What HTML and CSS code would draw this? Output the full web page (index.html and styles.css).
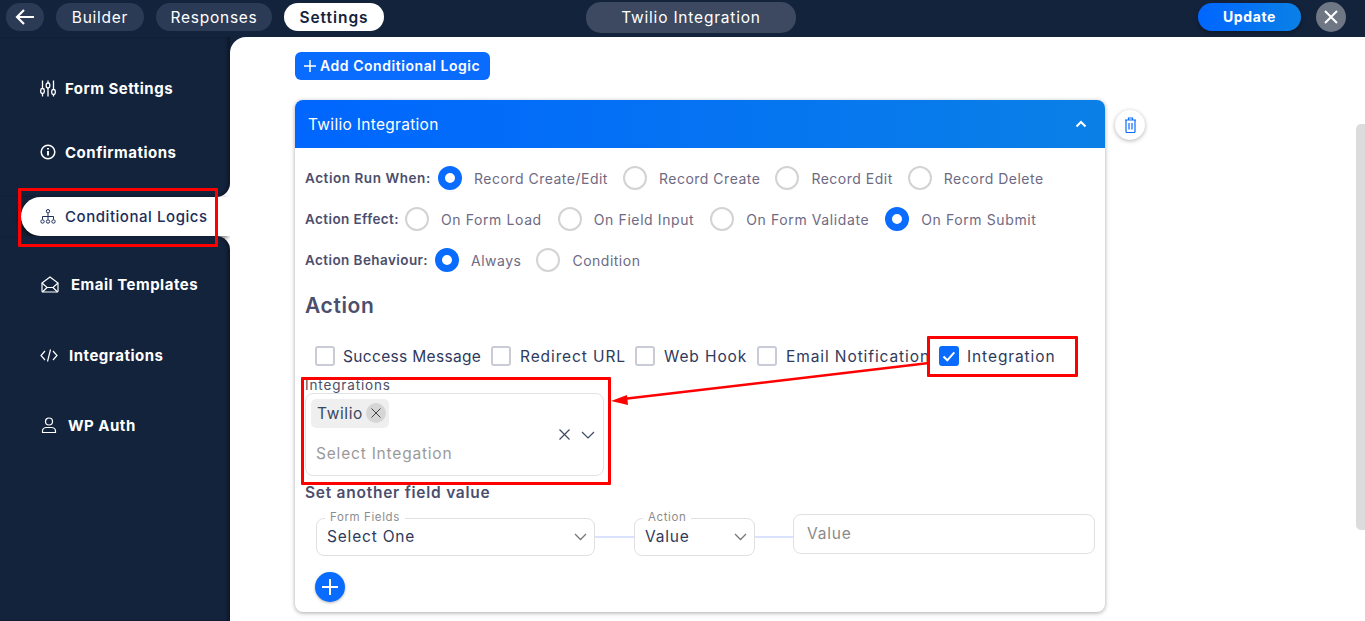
FILE: index.html
```html
<!DOCTYPE html>
<html lang="en">
<head>
    <meta charset="UTF-8">
    <meta name="viewport" content="width=device-width, initial-scale=1.0">
    <title>Twilio Integration</title>
    <link rel="stylesheet" href="styles.css">
</head>
<body>
    <header class="topbar">
        <div class="top-left">
            <a class="pill back"><svg width="22" height="18" viewBox="0 0 22 18" fill="none" stroke="#fff" stroke-width="2.2"><path d="M20 9H3M10 2L3 9l7 7"/></svg></a>
            <a class="pill builder">Builder</a>
            <a class="pill responses">Responses</a>
            <a class="pill active">Settings</a>
        </div>
        <div class="form-title">Twilio Integration</div>
        <div class="top-right">
            <a class="update">Update</a>
            <a class="close"><svg width="14" height="14" viewBox="0 0 14 14" stroke="#fff" stroke-width="2"><path d="M1 1l12 12M13 1L1 13"/></svg></a>
        </div>
    </header>
    <div class="page">
        <aside class="sidebar">
            <div class="side-top">
                <a class="nav nav-form"><svg width="16" height="17" viewBox="0 0 16 17" fill="none" stroke="#fff" stroke-width="1.300"><path d="M2.500 .5v16M8 .5v16M13.500 .5v16"/><rect x=".7" y="8.500" width="3.600" height="5" rx="1.800" fill="#14233c"/><rect x="6.200" y="3" width="3.600" height="5" rx="1.800" fill="#14233c"/><rect x="11.700" y="9.500" width="3.600" height="5" rx="1.800" fill="#14233c"/></svg><span>Form Settings</span></a>
                <a class="nav nav-conf"><svg width="16" height="16" viewBox="0 0 16 16" fill="none" stroke="#fff" stroke-width="1.500"><circle cx="8" cy="8" r="6.800"/><path d="M8 7v4.600M8 4v1.600" stroke-width="1.900"/></svg><span>Confirmations</span></a>
            </div>
            <div class="side-active">
                <a class="nav-pill"><svg width="16" height="15" viewBox="0 0 16 15" fill="none" stroke="#1c2e5c" stroke-width="1"><circle cx="8" cy="2.200" r="1.700"/><path d="M8 4v6.500M2.500 10.500V7.500h11v3"/><circle cx="2.500" cy="12.500" r="1.700"/><circle cx="8" cy="12.500" r="1.700"/><circle cx="13.500" cy="12.500" r="1.700"/></svg><span>Conditional Logics</span></a>
            </div>
            <div class="side-bottom">
                <a class="nav nav-email"><svg width="18" height="17" viewBox="0 0 18 17" fill="none" stroke="#fff" stroke-width="1.200"><path d="M1 7l8-6 8 6v8a1 1 0 0 1-1 1H2a1 1 0 0 1-1-1z"/><path d="M1 7l5 4.500h6L17 7M1.500 16L6 11.500M16.500 16L12 11.500"/></svg><span>Email Templates</span></a>
                <a class="nav nav-int"><svg width="18" height="13" viewBox="0 0 18 13" fill="none" stroke="#fff" stroke-width="1.200"><path d="M5 2L1 6.500l4 4.500M13 2l4 4.500-4 4.500M10.500 .5L7.500 12.500"/></svg><span>Integrations</span></a>
                <a class="nav nav-wp"><svg width="16" height="16" viewBox="0 0 16 16" fill="none" stroke="#fff" stroke-width="1.200"><circle cx="8" cy="4.500" r="3.500"/><path d="M1.500 15.500v-1.500c0-2 2-3.500 4-3.500h5c2 0 4 1.500 4 3.500v1.500z"/></svg><span>WP Auth</span></a>
            </div>
        </aside>
        <main class="content">
            <a class="add-btn"><svg width="12" height="12" viewBox="0 0 12 12" stroke="#fff" stroke-width="1.500"><path d="M6 0v12M0 6h12"/></svg>Add Conditional Logic</a>
            <div class="card-row">
                <section class="card">
                    <div class="card-head">
                        <span>Twilio Integration</span>
                        <svg width="12" height="8" viewBox="0 0 12 8" fill="none" stroke="#fff" stroke-width="2"><path d="M1.500 6.500L6 2l4.500 4.500"/></svg>
                    </div>
                    <div class="card-body">
                        <div class="radio-row">
                            <b class="w-run">Action Run When:</b>
                            <label class="radio on"><i></i>Record Create/Edit</label>
                            <label class="radio"><i></i>Record Create</label>
                            <label class="radio"><i></i>Record Edit</label>
                            <label class="radio"><i></i>Record Delete</label>
                        </div>
                        <div class="radio-row row-effect">
                            <b class="w-effect">Action Effect:</b>
                            <label class="radio"><i></i>On Form Load</label>
                            <label class="radio"><i></i>On Field Input</label>
                            <label class="radio"><i></i>On Form Validate</label>
                            <label class="radio on"><i></i>On Form Submit</label>
                        </div>
                        <div class="radio-row">
                            <b class="w-beh">Action Behaviour:</b>
                            <label class="radio on"><i></i>Always</label>
                            <label class="radio"><i></i>Condition</label>
                        </div>
                        <h2>Action</h2>
                        <div class="checks">
                            <label class="check c1"><i></i>Success Message</label>
                            <label class="check c2"><i></i>Redirect URL</label>
                            <label class="check c3"><i></i>Web Hook</label>
                            <label class="check c4"><i></i>Email Notification</label>
                            <label class="check c5 on"><i><svg width="14" height="11" viewBox="0 0 14 11" fill="none" stroke="#fff" stroke-width="2"><path d="M1.500 5.500l3.800 3.800 7-8"/></svg></i>Integration</label>
                        </div>
                        <div class="multi-label">Integrations</div>
                        <div class="multi">
                            <div class="multi-left">
                                <span class="tag">Twilio<em><svg width="10" height="10" viewBox="0 0 10 10" stroke="#444" stroke-width="1"><path d="M.5 .5l9 9M9.500 .5l-9 9"/></svg></em></span>
                                <span class="placeholder">Select Integation</span>
                            </div>
                            <svg width="11" height="11" viewBox="0 0 11 11" stroke="#3c4a66" stroke-width="1.200"><path d="M.5 .5l10 10M10.500 .5l-10 10"/></svg>
                            <svg width="14" height="8" viewBox="0 0 14 8" fill="none" stroke="#3c4a66" stroke-width="1.200"><path d="M1 1l6 6 6-6"/></svg>
                        </div>
                        <div class="set-title">Set another field value</div>
                        <div class="field-row">
                            <div class="field f-form"><span class="legend">Form Fields</span><span>Select One</span><svg width="13" height="8" viewBox="0 0 13 8" fill="none" stroke="#777" stroke-width="1.300"><path d="M1 1l5.500 5.500L12 1"/></svg></div>
                            <div class="link"></div>
                            <div class="field f-action"><span class="legend">Action</span><span>Value</span><svg width="13" height="8" viewBox="0 0 13 8" fill="none" stroke="#777" stroke-width="1.300"><path d="M1 1l5.500 5.500L12 1"/></svg></div>
                            <div class="link"></div>
                            <div class="field f-value">Value</div>
                        </div>
                        <a class="plus"><svg width="16" height="16" viewBox="0 0 16 16" stroke="#fff" stroke-width="2"><path d="M8 0v16M0 8h16"/></svg></a>
                    </div>
                </section>
                <a class="trash"><svg width="13" height="16" viewBox="0 0 13 16" fill="none" stroke="#0a6cff" stroke-width="1.200"><path d="M1 3h11M2 3v11.500a1 1 0 0 0 1 1h7a1 1 0 0 0 1-1V3M4.500 3V1h4v2M5 6v6.500M8 6v6.500"/></svg></a>
            </div>
            <div class="scroll-thumb"></div>
        </main>
    </div>
    <!-- red marks drawn on top of the screenshot -->
    <div class="mark m-nav"></div>
    <div class="mark m-check"></div>
    <div class="mark m-multi"></div>
    <svg class="arrow" width="330" height="50" viewBox="0 0 330 50"><path d="M318 1L12 37" stroke="#f00" stroke-width="2.500"/><path d="M0 39l16-6 1 10z" fill="#f00"/></svg>
</body>
</html>
```

FILE: styles.css
```css
*{
    box-sizing: border-box;
}
html, body{
    margin: 0;
    height: 100%;
    overflow: hidden;
}
body{
    font-family: "Inter", "Open Sans", sans-serif;
    color: #1c2e5c;
    background: #fff;
    position: relative;
}
svg{
    display: block;
    flex: none;
}

/* top bar */
.topbar{
    height: 37px;
    background: #14233c;
    display: flex;
    align-items: center;
    padding: 0 19px 3px 6px;
}
.top-left{
    display: flex;
    gap: 12px;
    width: 580px;
}
.pill{
    height: 28px;
    border-radius: 14px;
    background: #2b3a55;
    color: #fff;
    font-size: 15.5px;
    letter-spacing: .75px;
    display: flex;
    align-items: center;
    justify-content: center;
}
.pill.back{ width: 38px; }
.pill.builder{ width: 88px; }
.pill.responses{ width: 116px; }
.pill.active{
    width: 100px;
    background: #fff;
    color: #14233c;
    font-weight: 600;
    letter-spacing: .95px;
}
.form-title{
    width: 210px;
    height: 31px;
    border-radius: 15px;
    background: #3c4960;
    color: #fff;
    font-size: 15.5px;
    letter-spacing: .8px;
    display: flex;
    align-items: center;
    justify-content: center;
}
.top-right{
    margin-left: auto;
    display: flex;
    align-items: center;
    gap: 15px;
}
.update{
    width: 103px;
    height: 28px;
    border-radius: 14px;
    background: linear-gradient(90deg, #0066ff, #0a80e6);
    color: #fff;
    font-size: 14px;
    font-weight: 700;
    letter-spacing: .6px;
    padding-bottom: 1px;
    display: flex;
    align-items: center;
    justify-content: center;
    box-shadow: 0 2px 5px rgba(0,0,0,.35);
}
.close{
    width: 30px;
    height: 30px;
    border-radius: 50%;
    background: #6f7684;
    display: flex;
    align-items: center;
    justify-content: center;
}

/* sidebar */
.page{
    display: flex;
    height: 584px;
    background: #14233c;
}
.sidebar{
    width: 230px;
    flex: none;
    display: flex;
    flex-direction: column;
    background: #fff;
}
.side-top{
    height: 160px;
    padding-top: 31px;
    background: #14233c;
    border-bottom-right-radius: 14px;
    box-shadow: inset -3px 0 3px rgba(0,0,0,.3);
}
.side-active{
    height: 39px;
    background: linear-gradient(90deg, #14233c 60px, #fff 60px);
    padding-left: 21px;
}
.side-bottom{
    flex: 1;
    padding-top: 28px;
    background: #14233c;
    border-top-right-radius: 14px;
    box-shadow: inset -3px 0 3px rgba(0,0,0,.3);
}
.nav{
    color: #fff;
    font-size: 15px;
    font-weight: 700;
    letter-spacing: .5px;
    display: flex;
    align-items: center;
    height: 40px;
    padding-left: 40px;
    gap: 9px;
}
.nav-conf{ margin-top: 24px; }
.nav-email{ padding-left: 41px; gap: 12px; }
.nav-int{ gap: 11px; margin-top: 31px; }
.nav-wp{ padding-left: 41px; gap: 11px; margin-top: 30px; }
.nav-pill{
    height: 39px;
    border-radius: 20px 0 0 20px;
    background: #fff;
    box-shadow: -2px 2px 5px rgba(0,0,0,.55);
    color: #1c2e5c;
    font-size: 15px;
    font-weight: 500;
    letter-spacing: .55px;
    display: flex;
    align-items: center;
    padding-left: 19px;
    gap: 9px;
    white-space: nowrap;
}

/* main column */
.content{
    flex: 1;
    background: #fff;
    border-top-left-radius: 16px;
    padding: 15px 0 0 65px;
    position: relative;
}
.add-btn{
    width: 195px;
    height: 28px;
    padding: 0 0 1px 9px;
    border-radius: 6px;
    background: #0a6cff;
    color: #fff;
    font-size: 14px;
    font-weight: 600;
    letter-spacing: .55px;
    display: flex;
    align-items: center;
    gap: 4px;
    white-space: nowrap;
}
.card-row{
    display: flex;
    margin-top: 20px;
    gap: 10px;
    align-items: flex-start;
}
.card{
    width: 810px;
    height: 512px;
    border-radius: 8px;
    box-shadow: 0 1px 4px rgba(0,0,0,.35);
    background: #fff;
}
.card-head{
    height: 48px;
    border-radius: 8px 8px 0 0;
    background: linear-gradient(90deg, #0066ff, #0a80e6);
    color: #fff;
    font-size: 15.5px;
    letter-spacing: .3px;
    display: flex;
    align-items: center;
    justify-content: space-between;
    padding: 0 18px 0 13px;
}
.card-body{
    padding: 18px 10px 0 10px;
}
.radio-row{
    display: flex;
    align-items: center;
    height: 24px;
    margin-bottom: 17px;
    white-space: nowrap;
}
.radio-row b{
    font-size: 13.5px;
    font-weight: 600;
    letter-spacing: .55px;
    color: #4b4e6d;
}
.radio-row b.w-effect{ width: 100px; letter-spacing: .4px; }
.radio-row b.w-beh{ width: 130px; letter-spacing: .42px; }
.w-run{ width: 133px; }
.radio{
    display: flex;
    align-items: center;
    gap: 12px;
    font-size: 14px;
    letter-spacing: .5px;
    color: #6e6a84;
    margin-right: 15px;
}
.row-effect .radio{
    letter-spacing: .6px;
    margin-right: 16px;
}
.radio i{
    width: 24px;
    height: 24px;
    border-radius: 50%;
    border: 2px solid #d3d3d3;
    background: #fff;
}
.radio.on i{
    border: 7.5px solid #0a6cff;
}
h2{
    margin: 19px 0 0;
    height: 30px;
    line-height: 30px;
    font-size: 21px;
    font-weight: 600;
    letter-spacing: .6px;
    color: #4b4e6d;
}
.checks{
    display: flex;
    align-items: center;
    margin-top: 25px;
    padding-left: 10px;
    white-space: nowrap;
}
.check{
    display: flex;
    align-items: center;
    gap: 9px;
    font-size: 15.5px;
    letter-spacing: .9px;
    color: #2f3a5c;
}
.check i{
    width: 20px;
    height: 20px;
    border-radius: 3px;
    border: 2px solid #c9ccd6;
    display: flex;
    align-items: center;
    justify-content: center;
}
.check.on i{
    background: #0a6cff;
    border-color: #0a6cff;
}
.c1{ width: 176px; gap: 8px; letter-spacing: .33px; }
.c2{ width: 144px; }
.c3{ width: 122px; }
.c4{ width: 182px; }
.c5{ gap: 8px; }
.multi-label{
    margin-top: 12px;
    font-size: 13.5px;
    letter-spacing: .85px;
    line-height: 14px;
    color: #4b5068;
}
.multi{
    width: 299px;
    height: 83px;
    border: 1px solid #e3e3e6;
    border-radius: 8px;
    display: flex;
    align-items: center;
    padding-right: 8px;
    gap: 11px;
    margin-top: 1px;
}
.multi-left{
    flex: 1;
    display: flex;
    flex-direction: column;
    align-items: flex-start;
    padding-left: 5px;
    height: 100%;
    padding-top: 5px;
}
.tag{
    height: 29px;
    border-radius: 5px;
    background: #efefef;
    font-size: 15.5px;
    letter-spacing: .6px;
    color: #3c4660;
    padding: 0 3px 1px 6px;
    display: flex;
    align-items: center;
    gap: 3px;
}
.tag em{
    width: 20px;
    height: 20px;
    border-radius: 50%;
    background: #d6d6d6;
    display: flex;
    align-items: center;
    justify-content: center;
}
.placeholder{
    margin-top: 16px;
    margin-left: 5px;
    font-size: 15.5px;
    letter-spacing: .8px;
    color: #9a9a9a;
}
.set-title{
    margin-top: 8px;
    font-size: 15.5px;
    font-weight: 600;
    letter-spacing: .75px;
    line-height: 18px;
    color: #4b4e6d;
}
.field-row{
    display: flex;
    align-items: center;
    margin-top: 12px;
    padding-left: 11px;
}
.field{
    position: relative;
    flex: none;
    height: 38px;
    border: 1px solid #e0e0e3;
    border-radius: 8px;
    display: flex;
    align-items: center;
    justify-content: space-between;
    font-size: 15.5px;
    letter-spacing: .8px;
    color: #2f3a5c;
    padding: 0 7px 1px 10px;
    margin-top: 4px;
}
.f-form{ width: 279px; }
.f-action{ width: 121px; }
.f-value{
    width: 302px;
    height: 40px;
    margin-top: 0;
    align-self: flex-start;
    padding-left: 13px;
    color: #8a8a8a;
}
.legend{
    position: absolute;
    left: 8px;
    top: -8px;
    background: #fff;
    padding: 0 5px;
    font-size: 11.5px;
    letter-spacing: .6px;
    line-height: 12px;
    color: #8d8d8d;
}
.link{
    flex: none;
    width: 39px;
    height: 2px;
    background: #d9e3ff;
    margin-top: 4px;
}
.f-action + .link{ width: 38px; }
.plus{
    width: 30px;
    height: 30px;
    border-radius: 50%;
    background: #0a6cff;
    box-shadow: 0 1px 3px rgba(0,0,0,.3);
    display: flex;
    align-items: center;
    justify-content: center;
    margin: 16px 0 0 10px;
}
.trash{
    width: 30px;
    height: 30px;
    margin-top: 10px;
    border-radius: 50%;
    background: #fff;
    box-shadow: 0 1px 4px rgba(0,0,0,.3);
    display: flex;
    align-items: center;
    justify-content: center;
}
.scroll-thumb{
    position: absolute;
    right: 0;
    top: 87px;
    width: 9px;
    height: 406px;
    border-radius: 5px 0 0 5px;
    background: #dcdcdc;
}

/* annotations */
.mark{
    position: absolute;
    border: 3px solid #f00;
    border-radius: 1px;
    z-index: 5;
}
.m-nav{ left: 18px; top: 188px; width: 200px; height: 59px; }
.m-check{ left: 927px; top: 336px; width: 151px; height: 41px; }
.m-multi{ left: 301px; top: 377px; width: 310px; height: 108px; }
.arrow{
    position: absolute;
    left: 611px;
    top: 362px;
    z-index: 5;
}
```
